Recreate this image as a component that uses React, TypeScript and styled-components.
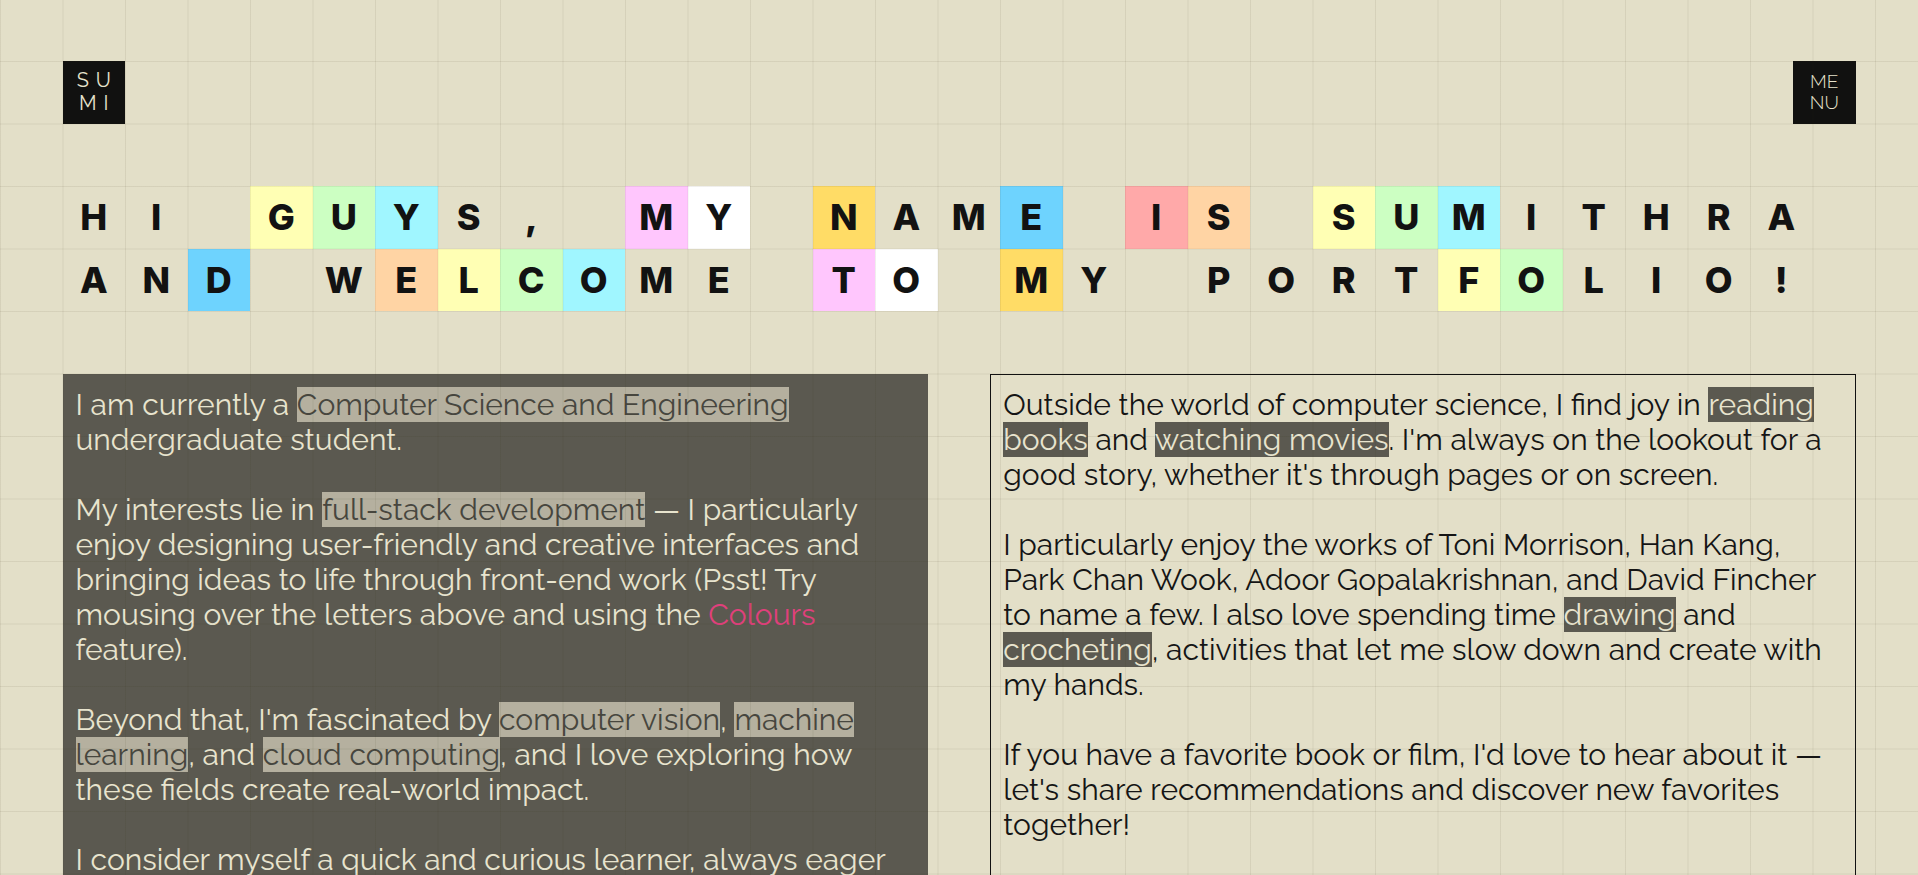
import React from 'react';
import styled, { createGlobalStyle } from 'styled-components';

const GlobalStyle = createGlobalStyle`
  html { scrollbar-width: none; }
  html::-webkit-scrollbar { display: none; }
  body {
    margin: 0;
    background: #e3dfc8;
    color: #151515;
    font-family: "Raleway", "Lato", "Noto Sans", sans-serif;
  }
`;

const GridOverlay = styled.div`
  position: fixed;
  inset: 0;
  pointer-events: none;
  z-index: 10;
  background-image:
    linear-gradient(to right, rgba(60, 50, 20, 0.08) 1px, transparent 1px),
    linear-gradient(to bottom, rgba(60, 50, 20, 0.08) 1px, transparent 1px);
  background-size: 62.5px 62.5px;
  background-position: 0 -1.5px;
`;

const Page = styled.main`
  display: flex;
  flex-direction: column;
  gap: 62.5px;
  padding: 61px 62.5px 0;
`;

const Header = styled.header`
  display: flex;
  justify-content: space-between;
  align-items: flex-start;
`;

const Badge = styled.div<{ $spaced?: boolean }>`
  width: 62.5px;
  height: 62.5px;
  background: #111110;
  color: #e6e2cc;
  display: flex;
  flex-direction: column;
  align-items: center;
  justify-content: center;
  font-family: "Raleway", "Lato", sans-serif;
  font-weight: ${p => (p.$spaced ? 400 : 300)};
  font-size: ${p => (p.$spaced ? '20px' : '19px')};
  line-height: ${p => (p.$spaced ? '23px' : '21.7px')};
  letter-spacing: ${p => (p.$spaced ? '7px' : '0')};
  padding-left: ${p => (p.$spaced ? '7px' : '0')};
  box-sizing: border-box;
`;

const Heading = styled.h1`
  margin: 0;
  display: grid;
  grid-template-columns: repeat(28, 62.5px);
  grid-auto-rows: 62.5px;
`;

const Tile = styled.span<{ $bg: string }>`
  display: flex;
  align-items: center;
  justify-content: center;
  background: ${p => p.$bg};
  font-family: "Inter", "Noto Sans", sans-serif;
  font-weight: 800;
  font-size: 36px;
  color: #121212;
`;

const Columns = styled.section`
  display: grid;
  grid-template-columns: 1fr 1fr;
  gap: 62.5px;
`;

const Card = styled.article<{ $dark?: boolean }>`
  box-sizing: border-box;
  min-height: 720px;
  padding: 12px 12px;
  background: ${p => (p.$dark ? '#5b5950' : 'transparent')};
  border: 1px solid ${p => (p.$dark ? '#5b5950' : '#111')};
  color: ${p => (p.$dark ? '#e8e4ce' : '#151515')};
  font-size: 30px;
  line-height: 35px;
`;

const Para = styled.p`
  margin: 0 0 35px;
`;

const Mark = styled.span<{ $dark?: boolean }>`
  background: ${p => (p.$dark ? '#b5b09f' : '#5b5950')};
  color: ${p => (p.$dark ? '#47463e' : '#e8e4ce')};
`;

const Accent = styled.span`
  color: #e0407c;
`;

const C = {
  none: 'transparent',
  yellow: '#ffffb4',
  green: '#ccffc2',
  cyan: '#a0f6ff',
  pink: '#ffc6fd',
  white: '#ffffff',
  gold: '#ffdc66',
  blue: '#6ed3fe',
  red: '#ffa9a9',
  peach: '#ffd4a4',
};

type Cell = [string, string];

const row1: Cell[] = [
  ['H', C.none], ['I', C.none], ['', C.none], ['G', C.yellow], ['U', C.green], ['Y', C.cyan],
  ['S', C.none], [',', C.none], ['', C.none], ['M', C.pink], ['Y', C.white], ['', C.none],
  ['N', C.gold], ['A', C.none], ['M', C.none], ['E', C.blue], ['', C.none], ['I', C.red],
  ['S', C.peach], ['', C.none], ['S', C.yellow], ['U', C.green], ['M', C.cyan], ['I', C.none],
  ['T', C.none], ['H', C.none], ['R', C.none], ['A', C.none],
];

const row2: Cell[] = [
  ['A', C.none], ['N', C.none], ['D', C.blue], ['', C.none], ['W', C.none], ['E', C.peach],
  ['L', C.yellow], ['C', C.green], ['O', C.cyan], ['M', C.none], ['E', C.none], ['', C.none],
  ['T', C.pink], ['O', C.white], ['', C.none], ['M', C.gold], ['Y', C.none], ['', C.none],
  ['P', C.none], ['O', C.none], ['R', C.none], ['T', C.none], ['F', C.yellow], ['O', C.green],
  ['L', C.none], ['I', C.none], ['O', C.none], ['!', C.none],
];

export default function App() {
  return (
    <>
      <GlobalStyle />
      <Page>
        <Header>
          <Badge $spaced>
            <span>SU</span>
            <span>MI</span>
          </Badge>
          <Badge>
            <span>ME</span>
            <span>NU</span>
          </Badge>
        </Header>

        <Heading aria-label="Hi guys, my name is Sumithra and welcome to my portfolio!">
          {[...row1, ...row2].map(([ch, bg], i) => (
            <Tile key={i} $bg={bg}>{ch}</Tile>
          ))}
        </Heading>

        <Columns>
          <Card $dark>
            <Para>
              I am currently a <Mark $dark>Computer Science and Engineering</Mark> undergraduate student.
            </Para>
            <Para>
              My interests lie in <Mark $dark>full-stack development</Mark> — I particularly enjoy designing
              user-friendly and creative interfaces and bringing ideas to life through front-end work (Psst! Try
              mousing over the letters above and using the <Accent>Colours</Accent> feature).
            </Para>
            <Para>
              Beyond that, I'm fascinated by <Mark $dark>computer vision</Mark>, <Mark $dark>machine learning</Mark>,
              and <Mark $dark>cloud computing</Mark>, and I love exploring how these fields create real-world impact.
            </Para>
            <Para>
              I consider myself a quick and curious learner, always eager to pick up new tools and ideas.
            </Para>
          </Card>
          <Card>
            <Para>
              Outside the world of computer science, I find joy in <Mark>reading books</Mark> and{' '}
              <Mark>watching movies</Mark>. I'm always on the lookout for a good story, whether it's through pages
              or on screen.
            </Para>
            <Para>
              I particularly enjoy the works of Toni Morrison, Han Kang, Park Chan Wook, Adoor Gopalakrishnan, and
              David Fincher to name a few. I also love spending time <Mark>drawing</Mark> and{' '}
              <Mark>crocheting</Mark>, activities that let me slow down and create with my hands.
            </Para>
            <Para>
              If you have a favorite book or film, I'd love to hear about it — let's share recommendations and
              discover new favorites together!
            </Para>
          </Card>
        </Columns>
      </Page>
      <GridOverlay />
    </>
  );
}
